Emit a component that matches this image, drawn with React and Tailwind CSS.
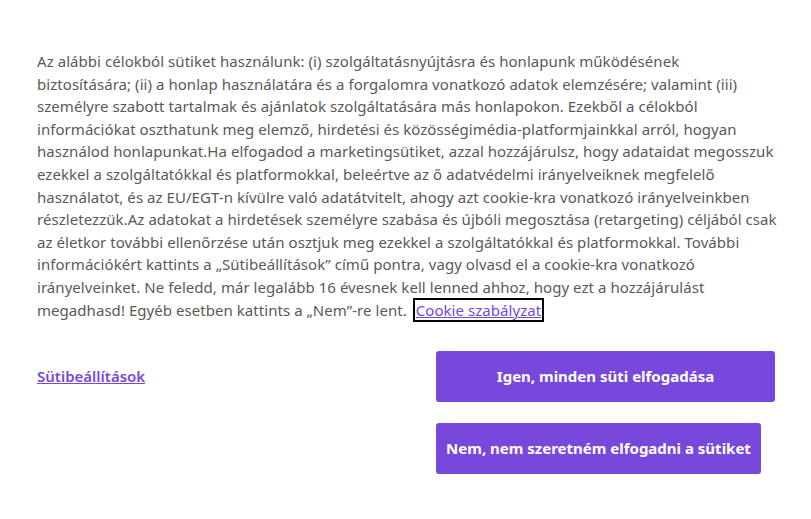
import React from 'react';

// Cookie consent dialog body
const lines = [
    'Az alábbi célokból sütiket használunk: (i) szolgáltatásnyújtásra és honlapunk működésének',
    'biztosítására; (ii) a honlap használatára és a forgalomra vonatkozó adatok elemzésére; valamint (iii)',
    'személyre szabott tartalmak és ajánlatok szolgáltatására más honlapokon. Ezekből a célokból',
    'információkat oszthatunk meg elemző, hirdetési és közösségimédia-platformjainkkal arról, hogyan',
    'használod honlapunkat.Ha elfogadod a marketingsütiket, azzal hozzájárulsz, hogy adataidat megosszuk',
    'ezekkel a szolgáltatókkal és platformokkal, beleértve az ő adatvédelmi irányelveiknek megfelelő',
    'használatot, és az EU/EGT-n kívülre való adatátvitelt, ahogy azt cookie-kra vonatkozó irányelveinkben',
    'részletezzük.Az adatokat a hirdetések személyre szabása és újbóli megosztása (retargeting) céljából csak',
    'az életkor további ellenőrzése után osztjuk meg ezekkel a szolgáltatókkal és platformokkal. További',
    'információkért kattints a „Sütibeállítások” című pontra, vagy olvasd el a cookie-kra vonatkozó',
    'irányelveinket. Ne feledd, már legalább 16 évesnek kell lenned ahhoz, hogy ezt a hozzájárulást',
];

export default function App() {
    return (
        <div className="w-[811px] h-[519px] bg-white font-['Noto_Sans','Open_Sans',sans-serif]">
            <div className="pl-[37px] pr-[20px] pt-[50px]">
                <p className="text-[15px] leading-[22.6px] text-[#595959] whitespace-nowrap tracking-[0.05px]">
                    {lines.map((l) => (
                        <React.Fragment key={l}>
                            {l}
                            <br />
                        </React.Fragment>
                    ))}
                    megadhasd! Egyéb esetben kattints a „Nem”-re lent.
                    <a href="#" className="ml-[8px] text-[#7848dd] underline outline-2 outline-black px-[1px]">
                        Cookie szabályzat
                    </a>
                </p>
            </div>

            <div className="flex items-start pl-[37px] pt-[30px]">
                <div className="w-[399px] h-[51px] flex items-center">
                    <a href="#" className="text-[15px] font-semibold text-[#7848dd] underline">
                        Sütibeállítások
                    </a>
                </div>
                <div className="flex flex-col gap-[21px]">
                    <button className="w-[339px] h-[51px] rounded-[3px] bg-[#7848dd] text-white text-[15px] font-bold">
                        Igen, minden süti elfogadása
                    </button>
                    <button className="w-[325px] h-[51px] rounded-[3px] bg-[#7848dd] text-white text-[15px] font-bold">
                        Nem, nem szeretném elfogadni a sütiket
                    </button>
                </div>
            </div>
        </div>
    );
}
